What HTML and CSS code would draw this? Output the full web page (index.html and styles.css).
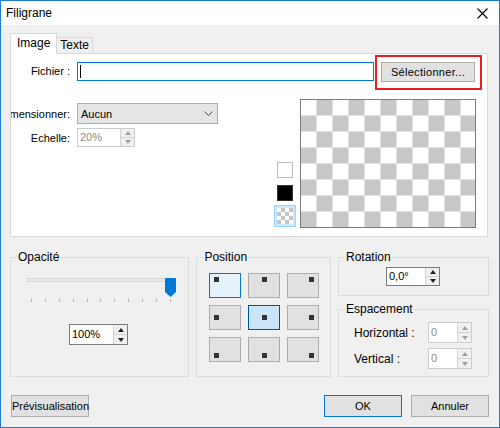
FILE: index.html
```html
<!DOCTYPE html>
<html lang="fr">
<head>
  <meta charset="UTF-8">
  <title>Filigrane</title>
  <link rel="stylesheet" href="styles.css">
</head>
<body>
  <div class="window">
    <header class="titlebar">
      <span class="title">Filigrane</span>
      <svg class="close" width="11" height="11" viewBox="0 0 11 11">
        <path d="M0.5 0.5 L10.5 10.5 M10.5 0.5 L0.5 10.5" stroke="#000" stroke-width="1.1" fill="none"/>
      </svg>
    </header>

    <div class="main">
      <div class="tabs">
        <span class="tab active">Image</span>
        <span class="tab">Texte</span>
      </div>

      <section class="panel">
        <div class="file-row">
          <label class="label">Fichier :</label>
          <div class="input focused"><span class="caret"></span></div>
          <button class="btn select-btn">Sélectionner...</button>
        </div>

        <div class="body-row">
          <div class="form">
            <div class="form-row">
              <span class="label clip"><span>Redimensionner:</span></span>
              <div class="combo">
                <span>Aucun</span>
                <svg width="9" height="5" viewBox="0 0 9 5"><path d="M0.5 0.5 L4.5 4.5 L8.5 0.5" stroke="#444" fill="none"/></svg>
              </div>
            </div>
            <div class="form-row">
              <span class="label">Echelle:</span>
              <div class="spin disabled scale-spin">
                <span class="spin-value">20%</span>
                <span class="spin-btns"><span class="up"></span><span class="down"></span></span>
              </div>
            </div>
          </div>

          <div class="swatches">
            <span class="swatch"><span class="chip white"></span></span>
            <span class="swatch"><span class="chip black"></span></span>
            <span class="swatch selected"><span class="chip checker-small"></span></span>
          </div>

          <div class="preview"></div>
        </div>
      </section>

      <div class="groups">
        <div class="group opacity">
          <div class="group-title">Opacité</div>
          <div class="slider">
            <div class="track"></div>
            <svg class="thumb" width="11" height="19" viewBox="0 0 11 19">
              <path d="M0 1 Q0 0 1 0 H10 Q11 0 11 1 V14 L5.5 19 L0 14 Z" fill="#0078d7"/>
            </svg>
          </div>
          <div class="ticks">
            <i></i><i></i><i></i><i></i><i></i><i></i><i></i><i></i><i></i><i></i><i></i>
          </div>
          <div class="spin opacity-spin">
            <span class="spin-value">100%</span>
            <span class="spin-btns"><span class="up"></span><span class="down"></span></span>
          </div>
        </div>

        <div class="group position">
          <div class="group-title">Position</div>
          <div class="pos-grid">
            <span class="pos top left current"><i></i></span>
            <span class="pos top center"><i></i></span>
            <span class="pos top right"><i></i></span>
            <span class="pos middle left"><i></i></span>
            <span class="pos middle center checked"><i></i></span>
            <span class="pos middle right"><i></i></span>
            <span class="pos bottom left"><i></i></span>
            <span class="pos bottom center"><i></i></span>
            <span class="pos bottom right"><i></i></span>
          </div>
        </div>

        <div class="side">
          <div class="group rotation">
            <div class="group-title">Rotation</div>
            <div class="spin rotation-spin">
              <span class="spin-value">0,0°</span>
              <span class="spin-btns"><span class="up"></span><span class="down"></span></span>
            </div>
          </div>

          <div class="group spacing">
            <div class="group-title">Espacement</div>
            <div class="spacing-row">
              <span class="spacing-label">Horizontal :</span>
              <div class="spin disabled small-spin">
                <span class="spin-value">0</span>
                <span class="spin-btns"><span class="up"></span><span class="down"></span></span>
              </div>
            </div>
            <div class="spacing-row">
              <span class="spacing-label">Vertical :</span>
              <div class="spin disabled small-spin">
                <span class="spin-value">0</span>
                <span class="spin-btns"><span class="up"></span><span class="down"></span></span>
              </div>
            </div>
          </div>
        </div>
      </div>

      <footer class="actions">
        <button class="btn">Prévisualisation</button>
        <div class="actions-right">
          <button class="btn default">OK</button>
          <button class="btn">Annuler</button>
        </div>
      </footer>
    </div>

    <div class="highlight"></div>
  </div>
</body>
</html>
```

FILE: styles.css
```css
* {
  box-sizing: border-box;
}

body {
  margin: 0;
  font-family: "Liberation Sans", Arial, sans-serif;
  font-size: 11px;
  color: #000;
}

.window {
  position: relative;
  width: 500px;
  height: 428px;
  border: 1px solid #1c7cd5;
  background: #f0f0f0;
}

/* Title bar */
.titlebar {
  height: 24px;
  background: #fff;
  display: flex;
  align-items: center;
  justify-content: space-between;
  padding: 0 11px 0 5px;
}

.title {
  font-size: 12px;
}

.main {
  padding: 8px 10px 0 9px;
}

/* Tabs */
.tabs {
  position: relative;
  z-index: 1;
  display: flex;
  align-items: flex-end;
  margin-bottom: -1px;
}

.tab {
  height: 16px;
  line-height: 15px;
  padding: 0 3px;
  border: 1px solid #d9d9d9;
  border-bottom: none;
  border-left: none;
  margin-bottom: 1px;
  font-size: 12px;
}

.tab.active {
  height: 21px;
  line-height: 19px;
  padding: 0 6px;
  margin-bottom: 0;
  background: #fff;
  border-left: 1px solid #d9d9d9;
}

.panel {
  height: 184px;
  margin-right: 1px;
  background: #fff;
  border: 1px solid #d9d9d9;
}

.label {
  width: 59px;
  margin-right: 7px;
  text-align: right;
  white-space: nowrap;
}

.label.clip {
  display: flex;
  justify-content: flex-end;
  overflow: hidden;
}

.file-row {
  display: flex;
  align-items: flex-start;
  margin-top: 8px;
}

.file-row .label {
  line-height: 19px;
}

.input {
  width: 297px;
  height: 19px;
  margin-right: 7px;
  border: 1px solid #7a7a7a;
  background: #fff;
  display: flex;
  align-items: center;
}

.input.focused {
  border-color: #0078d7;
}

.caret {
  width: 1px;
  height: 13px;
  margin-left: 2px;
  background: #000;
}

.btn {
  font: inherit;
  color: #000;
  height: 22px;
  width: 78px;
  padding: 0;
  background: #e1e1e1;
  border: 1px solid #adadad;
}

.select-btn {
  width: 94px;
  height: 20px;
  letter-spacing: 0.3px;
}

.highlight {
  position: absolute;
  left: 374px;
  top: 54px;
  width: 107px;
  height: 35px;
  border: 2px solid #ec1c24;
}

/* Image options */
.body-row {
  display: flex;
  margin-top: 17px;
}

.form {
  flex: 1;
  padding-top: 4px;
}

.form-row {
  display: flex;
  align-items: center;
  margin-bottom: 4px;
}

.combo {
  width: 141px;
  height: 21px;
  padding: 0 4px 0 3px;
  display: flex;
  align-items: center;
  justify-content: space-between;
  background: #e5e5e5;
  border: 1px solid #adadad;
}

.spin {
  display: flex;
  height: 21px;
  background: #fff;
  border: 1px solid #7a7a7a;
}

.spin.disabled {
  border-color: #cccccc;
  color: #8c8c8c;
}

.spin-value {
  flex: 1;
  line-height: 19px;
  padding-left: 2px;
}

.spin-btns {
  width: 14px;
  display: flex;
  flex-direction: column;
  border-left: 1px solid #d4d4d4;
  background: #f0f0f0;
}

.spin-btns span {
  flex: 1;
  display: flex;
  align-items: center;
  justify-content: center;
}

.spin-btns .up {
  border-bottom: 1px solid #d4d4d4;
}

.spin-btns .up::before {
  content: '';
  border: 3px solid transparent;
  border-top: none;
  border-bottom: 4px solid #222;
}

.spin-btns .down::before {
  content: '';
  border: 3px solid transparent;
  border-bottom: none;
  border-top: 4px solid #222;
}

.spin.disabled .spin-btns .up::before {
  border-bottom-color: #a0a0a0;
}

.spin.disabled .spin-btns .down::before {
  border-top-color: #a0a0a0;
}

.scale-spin {
  width: 58px;
  height: 19px;
}

.scale-spin .spin-value {
  line-height: 17px;
}

.swatches {
  align-self: flex-end;
  display: flex;
  flex-direction: column;
  gap: 1px;
  margin: 0 4px 1px 0;
}

.swatch {
  width: 22px;
  height: 22px;
  padding: 2px;
  border: 1px solid transparent;
}

.swatch.selected {
  background: #cce8ff;
  border-color: #99d1ff;
}

.chip {
  display: block;
  width: 16px;
  height: 16px;
  border: 1px solid #bcbcbc;
}

.chip.white {
  background: #fff;
}

.chip.black {
  background: #000;
  border-color: #333;
}

.chip.checker-small {
  border: none;
  background: repeating-conic-gradient(#c4c4c4 0 25%, #fff 0 50%) 0 0 / 8px 8px;
}

.preview {
  width: 176px;
  height: 129px;
  margin-right: 11px;
  border: 1px solid #7c7c7c;
  background:
    linear-gradient(90deg, #e2e2e2 1px, transparent 1px) -1px 0 / 16px 16px,
    linear-gradient(#e2e2e2 1px, transparent 1px) 0 -1px / 16px 16px,
    repeating-conic-gradient(#c8c8c8 0 25%, #fff 0 50%) 0 0 / 32px 32px;
}

/* Group boxes */
.groups {
  display: flex;
  gap: 7px;
  margin-top: 20px;
}

.group {
  border: 1px solid #dcdcdc;
}

.group-title {
  width: fit-content;
  margin: -8px 0 0 6px;
  padding: 0 1px;
  line-height: 15px;
  font-size: 12px;
  background: #f0f0f0;
}

.opacity {
  width: 180px;
  height: 120px;
}

.slider {
  position: relative;
  width: 149px;
  height: 19px;
  margin: 13px 0 0 16px;
}

.track {
  height: 4px;
  margin-top: 7px;
  background: #e7e7e7;
  border: 1px solid #d6d6d6;
}

.thumb {
  position: absolute;
  top: 0;
  right: 0;
}

.ticks {
  display: flex;
  justify-content: space-between;
  width: 140px;
  margin: 2px 0 0 20px;
}

.ticks i {
  width: 1px;
  height: 3px;
  background: #b4b4b4;
}

.opacity-spin {
  width: 59px;
  margin: 22px 0 0 58px;
}

.position {
  width: 135px;
  height: 120px;
}

.pos-grid {
  display: grid;
  grid-template-columns: repeat(3, 32px);
  grid-auto-rows: 25px;
  column-gap: 7px;
  row-gap: 7px;
  margin: 8px 0 0 12px;
}

.pos {
  display: flex;
  padding: 3px 4px;
  background: #e1e1e1;
  border: 1px solid #adadad;
}

.pos i {
  width: 5px;
  height: 5px;
  background: #333;
}

.pos.current {
  background: #e5f1fb;
  border-color: #0078d7;
}

.pos.checked {
  background: #cce4f7;
  border-color: #005499;
}

.pos.top { align-items: flex-start; }
.pos.middle { align-items: center; }
.pos.bottom { align-items: flex-end; }
.pos.left { justify-content: flex-start; }
.pos.center { justify-content: center; }
.pos.right { justify-content: flex-end; }

.side {
  display: flex;
  flex-direction: column;
  gap: 13px;
}

.rotation {
  width: 151px;
  height: 39px;
}

.rotation-spin {
  width: 54px;
  height: 19px;
  margin: 2px 0 0 47px;
}

.rotation-spin .spin-value {
  line-height: 17px;
}

.spacing {
  width: 151px;
  height: 68px;
}

.spacing-row {
  display: flex;
  align-items: center;
  margin-top: 5px;
  padding-left: 15px;
}

.spacing-row:first-of-type {
  margin-top: 4px;
}

.spacing-label {
  width: 74px;
  font-size: 12px;
}

.small-spin {
  width: 44px;
}

/* Footer */
.actions {
  display: flex;
  justify-content: space-between;
  margin-top: 18px;
  padding-left: 1px;
}

.actions-right {
  display: flex;
  gap: 9px;
}

.btn.default {
  border-color: #0078d7;
}
```
